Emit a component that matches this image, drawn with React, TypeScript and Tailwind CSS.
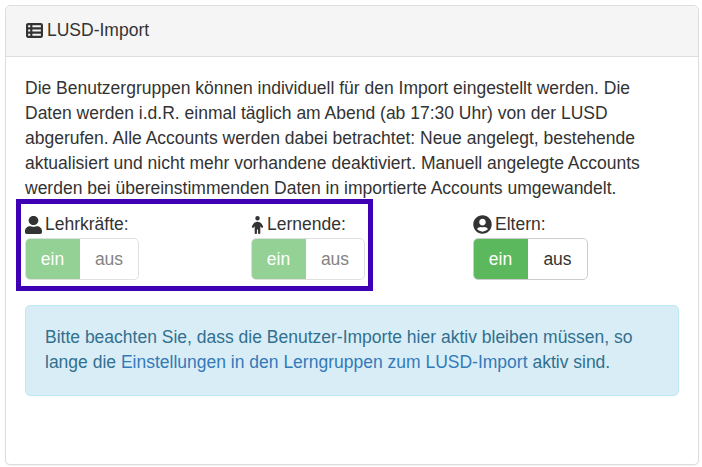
import React from 'react';
import { FaUser, FaUserCircle } from 'react-icons/fa';
import { FaChild, FaTableList } from 'react-icons/fa6';

function Toggle({ disabled }: { disabled?: boolean }) {
  return (
    <div className={`flex h-[42px] overflow-hidden rounded-[5px] border ${disabled ? 'w-[114px] border-[#e0e0e0]' : 'w-[115px] border-[#ccc]'}`}>
      <div className={`-my-px -ml-px flex w-[55px] items-center justify-center text-white ${disabled ? 'bg-[#94d194]' : 'bg-[#5cb85c]'}`}>
        ein
      </div>
      <div className={`flex flex-1 items-center justify-center ${disabled ? 'text-[#848484]' : 'text-[#333]'}`}>aus</div>
    </div>
  );
}

export default function App() {
  return (
    <div className="relative h-[467px] w-[702px] bg-white font-['Liberation_Sans',Arial,sans-serif] text-[17.5px] leading-[25px] text-[#333]">
      <div className="absolute left-[5px] top-[5px] h-[460px] w-[694px] overflow-hidden rounded-[5px] border border-[#ddd] bg-white shadow-[0_1px_1px_rgba(0,0,0,0.05)]">
        {/* Header */}
        <div className="flex h-[51px] items-center gap-[3px] border-b border-[#ddd] bg-[#f5f5f5] px-[19px] pb-[2px]">
          <FaTableList className="h-[17px] w-[19px]" />
          <span>LUSD-Import</span>
        </div>

        <div className="px-[19px] pt-[19px]">
          <p>
            Die Benutzergruppen können individuell für den Import eingestellt werden. Die
            <br />
            Daten werden i.d.R. einmal täglich am Abend (ab 17:30 Uhr) von der LUSD
            <br />
            abgerufen. Alle Accounts werden dabei betrachtet: Neue angelegt, bestehende
            <br />
            aktualisiert und nicht mehr vorhandene deaktiviert. Manuell angelegte Accounts
            <br />
            werden bei übereinstimmenden Daten in importierte Accounts umgewandelt.
          </p>

          <div className="mt-[11px] grid grid-cols-[226px_222px_1fr]">
            <div>
              <div className="mb-[1px] flex items-center gap-[3px]">
                <FaUser className="h-[18px] w-[17px]" preserveAspectRatio="none" />
                <span>Lehrkräfte:</span>
              </div>
              <Toggle disabled />
            </div>
            <div>
              <div className="mb-[1px] flex items-center gap-[3px]">
                <FaChild className="h-[18px] w-[13px]" />
                <span>Lernende:</span>
              </div>
              <Toggle disabled />
            </div>
            <div>
              <div className="mb-[1px] flex items-center gap-[3px]">
                <FaUserCircle className="h-[19px] w-[19px]" />
                <span>Eltern:</span>
              </div>
              <Toggle />
            </div>
          </div>

          <div className="mt-[25px] h-[91px] rounded-[5px] border border-[#bce8f1] bg-[#d9edf7] p-[19px] text-[#31708f]">
            Bitte beachten Sie, dass die Benutzer-Importe hier aktiv bleiben müssen, so
            <br />
            lange die <span className="text-[#337ab7]">Einstellungen in den Lerngruppen zum LUSD-Import</span> aktiv sind.
          </div>
        </div>
      </div>

      {/* Highlight frame over the first two toggles */}
      <div className="absolute left-[16px] top-[199px] h-[92px] w-[357px] border-[5px] border-[#3f00b5]" />
    </div>
  );
}
